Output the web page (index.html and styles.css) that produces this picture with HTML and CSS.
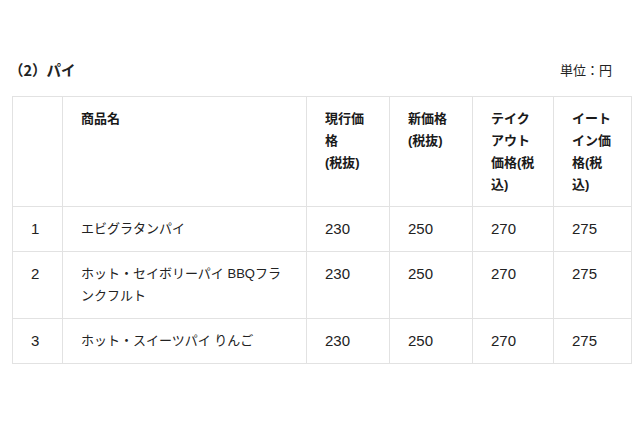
FILE: index.html
```html
<!DOCTYPE html>
<html lang="ja">
<head>
<meta charset="utf-8">
<link rel="stylesheet" href="styles.css">
</head>
<body>
<div class="page">
  <div class="head">
    <h2 class="title">（2）パイ</h2>
    <div class="unit">単位：円</div>
  </div>
  <table class="price">
    <colgroup>
      <col class="c-no"><col class="c-name"><col class="c-p1"><col class="c-p2"><col class="c-p3"><col class="c-p4">
    </colgroup>
    <thead>
      <tr>
        <th></th>
        <th>商品名</th>
        <th>現行価格<br>(税抜)</th>
        <th>新価格<br>(税抜)</th>
        <th>テイクアウト価格(税込)</th>
        <th>イートイン価格(税込)</th>
      </tr>
    </thead>
    <tbody>
      <tr><td class="num">1</td><td>エビグラタンパイ</td><td class="num">230</td><td class="num">250</td><td class="num">270</td><td class="num">275</td></tr>
      <tr><td class="num">2</td><td class="name">ホット・セイボリーパイ BBQフランクフルト</td><td class="num">230</td><td class="num">250</td><td class="num">270</td><td class="num">275</td></tr>
      <tr><td class="num">3</td><td>ホット・スイーツパイ りんご</td><td class="num">230</td><td class="num">250</td><td class="num">270</td><td class="num">275</td></tr>
    </tbody>
  </table>
</div>
</body>
</html>
```

FILE: styles.css
```css
html, body {
  margin: 0;
  padding: 0;
  background: #fff;
}
body {
  font-family: "Liberation Sans", "Noto Sans CJK JP", sans-serif;
  color: #222;
  font-size: 13px;
}
.page {
  padding: 59px 0 0 12px;
  width: 619px;
}
.head {
  display: flex;
  justify-content: space-between;
  align-items: center;
  height: 22px;
  margin-bottom: 15px;
}
.title {
  margin: 0;
  font-size: 14.5px;
  font-weight: bold;
  line-height: 22px;
  font-family: "Noto Sans CJK JP", sans-serif;
  margin-left: -3px;
}
.unit {
  font-size: 13px;
  line-height: 22px;
  padding-right: 19px;
  font-family: "Noto Sans CJK JP", sans-serif;
}
.price {
  border-collapse: collapse;
  table-layout: fixed;
  width: 619px;
}
.c-no { width: 50px; }
.c-name { width: 244px; }
.c-p1 { width: 83px; }
.c-p2 { width: 83px; }
.c-p3 { width: 81px; }
.c-p4 { width: 78px; }
.price th,
.price td {
  border: 1px solid #e2e2e2;
  padding: 11px 18px 11px 18px;
  line-height: 22px;
  text-align: left;
  vertical-align: top;
  word-break: break-all;
}
.price th {
  font-weight: bold;
  color: #1a1a1a;
  padding-bottom: 10px;
}
.price td.num {
  font-size: 15px;
}
```
